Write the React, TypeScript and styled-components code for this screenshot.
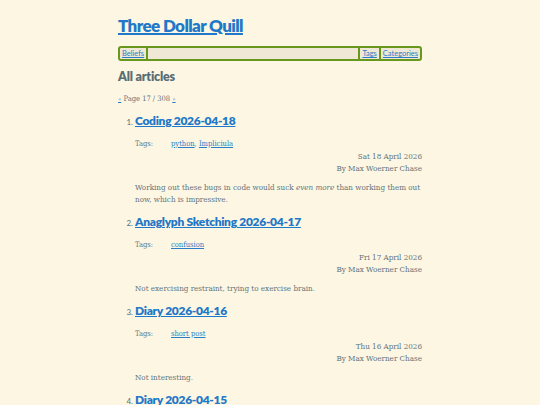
import React from "react";
import styled, { createGlobalStyle } from "styled-components";

const Global = createGlobalStyle`
  html, body { margin: 0; padding: 0; background: #fdf6e3; }
  body { font-family: "DejaVu Serif Condensed", "DejaVu Serif", "Liberation Serif", serif; color: #5f747c; }
`;

const Page = styled.div`
  width: 304px;
  margin: 0 auto;
  padding-top: 14px;
`;

const SiteTitle = styled.h1`
  margin: 0 0 8px 0;
  font-family: Lato, "Open Sans", sans-serif;
  font-weight: 800;
  font-size: 17px;
  line-height: 24px;
  letter-spacing: -0.6px;
  a { color: #1f78c8; text-decoration: underline; text-decoration-thickness: 1.5px; }
`;

const Nav = styled.nav`
  display: flex;
  align-items: stretch;
  height: 11px;
  border: 2px solid #67981d;
  border-radius: 3px;
  background: #eee8d5;
  font-family: Lato, "Open Sans", sans-serif;
  font-size: 7.5px;
  line-height: 11px;
`;

const NavLink = styled.a`
  color: #2a7ec8;
  text-decoration: underline;
  padding: 0 2px;
`;

const Sep = styled.span`
  width: 2px;
  background: #67981d;
`;

const Spacer = styled.span`
  flex: 1;
`;

const Heading = styled.h2`
  margin: 8px 0 0 0;
  font-family: Lato, "Open Sans", sans-serif;
  font-weight: 800;
  font-size: 12.5px;
  line-height: 16px;
  letter-spacing: -0.2px;
  color: #586e75;
`;

const Pager = styled.p`
  margin: 8px 0 0 0;
  font-size: 7.5px;
  line-height: 12px;
  a { color: #2a7ec8; text-decoration: underline; font-size: 6px; }
`;

const List = styled.ol`
  margin: 7px 0 0 0;
  padding-left: 17px;
  li::marker { font-family: Lato, "Open Sans", sans-serif; font-size: 8px; color: #586e75; }
`;

const Item = styled.li`
  margin-bottom: 7px;
`;

const ItemTitle = styled.h3`
  margin: 0;
  font-family: Lato, "Open Sans", sans-serif;
  font-weight: 800;
  font-size: 12px;
  line-height: 18px;
  letter-spacing: -0.3px;
  a { color: #1f78c8; text-decoration: underline; }
`;

const Tags = styled.div`
  display: flex;
  margin-top: 8px;
  font-size: 7.5px;
  line-height: 12px;
`;

const TagLabel = styled.span`
  width: 36px;
`;

const TagLink = styled.a`
  color: #2a7ec8;
  text-decoration: underline;
`;

const Meta = styled.div`
  margin-top: 1px;
  text-align: right;
  font-size: 8px;
  line-height: 12px;
`;

const Excerpt = styled.p`
  margin: 7px 0 0 0;
  font-size: 8px;
  line-height: 12px;
`;

type Post = { title: string; tags: string[]; date: string; body: React.ReactNode };

const posts: Post[] = [
  {
    title: "Coding 2026-04-18",
    tags: ["python", "Impliciula"],
    date: "Sat 18 April 2026",
    body: (
      <>
        Working out these bugs in code would suck <em>even more</em> than working them out now, which is impressive.
      </>
    ),
  },
  {
    title: "Anaglyph Sketching 2026-04-17",
    tags: ["confusion"],
    date: "Fri 17 April 2026",
    body: "Not exercising restraint, trying to exercise brain.",
  },
  {
    title: "Diary 2026-04-16",
    tags: ["short post"],
    date: "Thu 16 April 2026",
    body: "Not interesting.",
  },
  {
    title: "Diary 2026-04-15",
    tags: ["short post"],
    date: "Wed 15 April 2026",
    body: "Not interesting.",
  },
];

export default function App() {
  return (
    <>
      <Global />
      <Page>
        <SiteTitle>
          <a href="#">Three Dollar Quill</a>
        </SiteTitle>
        <Nav>
          <NavLink href="#">Beliefs</NavLink>
          <Sep />
          <Spacer />
          <Sep />
          <NavLink href="#">Tags</NavLink>
          <Sep />
          <NavLink href="#">Categories</NavLink>
        </Nav>
        <Heading>All articles</Heading>
        <Pager>
          <a href="#">«</a> Page 17 / 308 <a href="#">»</a>
        </Pager>
        <List>
          {posts.map((p) => (
            <Item key={p.title}>
              <ItemTitle>
                <a href="#">{p.title}</a>
              </ItemTitle>
              <Tags>
                <TagLabel>Tags:</TagLabel>
                <span>
                  {p.tags.map((t, i) => (
                    <React.Fragment key={t}>
                      {i > 0 && ", "}
                      <TagLink href="#">{t}</TagLink>
                    </React.Fragment>
                  ))}
                </span>
              </Tags>
              <Meta>
                {p.date}
                <br />
                By Max Woerner Chase
              </Meta>
              <Excerpt>{p.body}</Excerpt>
            </Item>
          ))}
        </List>
      </Page>
    </>
  );
}
